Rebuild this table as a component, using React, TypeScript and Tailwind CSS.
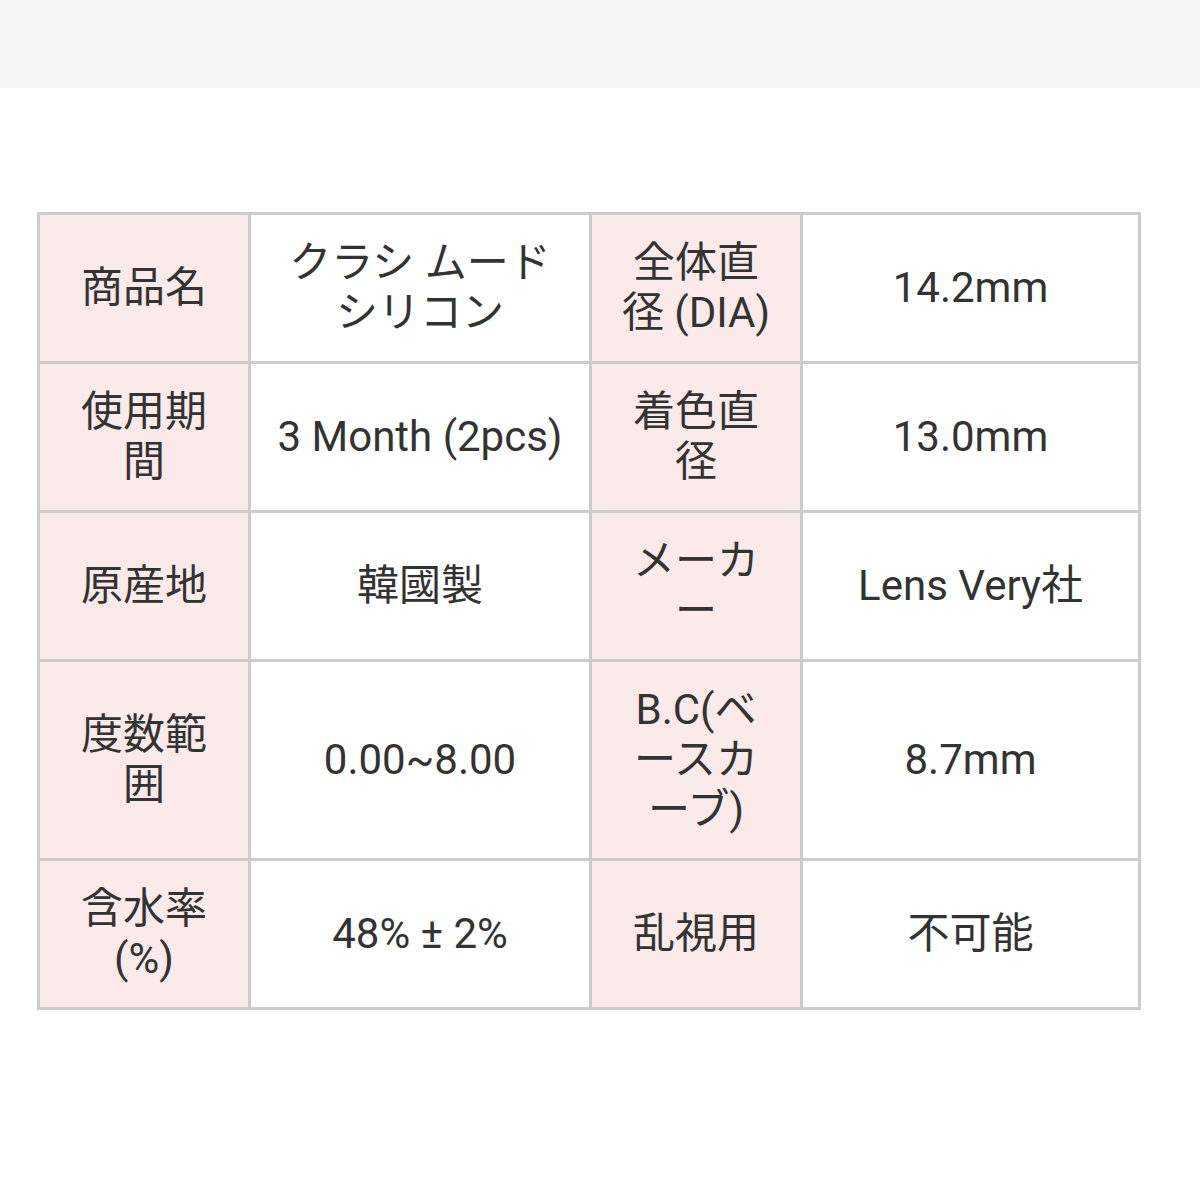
import React from "react";

const rows: [string, string, string, string][] = [
  ["商品名", "クラシ ムード シリコン", "全体直径 (DIA)", "14.2mm"],
  ["使用期間", "3 Month (2pcs)", "着色直径", "13.0mm"],
  ["原産地", "韓國製", "メーカー", "Lens Very社"],
  ["度数範囲", "0.00~8.00", "B.C(ベースカーブ)", "8.7mm"],
  ["含水率 (%)", "48% ± 2%", "乱視用", "不可能"],
];

export default function App() {
  return (
    <div
      className="w-[1200px] h-[1200px] bg-white text-[#333333]"
      style={{ fontFamily: 'Roboto, "Noto Sans CJK JP", sans-serif' }}
    >
      <div className="h-[88px] bg-[#f7f7f7]" />
      <table className="ml-[37px] mt-[124px] w-[1101px] table-fixed border-collapse border-[3px] border-[#cccccc] text-[42px] leading-[50px]">
        <colgroup>
          <col className="w-[211px]" />
          <col className="w-[341px]" />
          <col className="w-[211px]" />
          <col className="w-[338px]" />
        </colgroup>
        <tbody>
          {rows.map((r, i) => (
            <tr key={i}>
              <td className="border-[3px] border-[#cccccc] bg-[#fbeaea] px-[26px] py-[23px] text-center align-middle">
                {r[0]}
              </td>
              <td className="border-[3px] border-[#cccccc] bg-white px-[20px] py-[23px] text-center align-middle">
                {r[1]}
              </td>
              <td className="border-[3px] border-[#cccccc] bg-[#fbeaea] px-[26px] py-[23px] text-center align-middle">
                {r[2]}
              </td>
              <td className="border-[3px] border-[#cccccc] bg-white px-[20px] py-[23px] text-center align-middle">
                {r[3]}
              </td>
            </tr>
          ))}
        </tbody>
      </table>
    </div>
  );
}
